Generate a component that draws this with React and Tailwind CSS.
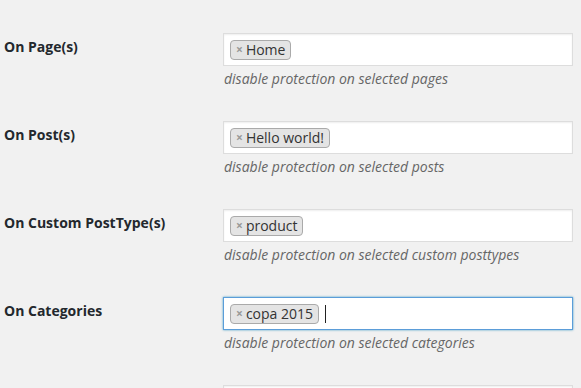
import React from 'react';

const ROWS = [
  { label: 'On Page(s)', tag: 'Home', hint: 'disable protection on selected pages' },
  { label: 'On Post(s)', tag: 'Hello world!', hint: 'disable protection on selected posts' },
  { label: 'On Custom PostType(s)', tag: 'product', hint: 'disable protection on selected custom posttypes' },
  { label: 'On Categories', tag: 'copa 2015', hint: 'disable protection on selected categories', focused: true },
  { label: '', tag: null, hint: '' },
];

function TagBox({ tag, focused }) {
  return (
    <div
      className={`w-[350px] h-[33px] bg-white border flex items-center pl-[6px] ${
        focused
          ? 'border-[#5b9dd9] shadow-[0_0_2px_rgba(30,140,190,0.8)]'
          : 'border-[#dddddd] shadow-[inset_0_1px_2px_rgba(0,0,0,0.07)]'
      }`}
    >
      {tag && (
        <span className="h-[20px] flex items-center bg-[#e4e4e4] border border-[#aaaaaa] rounded-[4px] pl-[5px] pr-[5px] text-[#333333] text-[14px] leading-none">
          <span className="text-[#999999] text-[12px] font-bold mr-[3px]">×</span>
          {tag}
        </span>
      )}
      {focused && <span className="ml-[6px] w-px h-[18px] bg-[#222222]" />}
    </div>
  );
}

export default function App() {
  return (
    <div
      className="w-[581px] h-[388px] overflow-hidden bg-[#f1f1f1] pt-[33px]"
      style={{ fontFamily: '"Open Sans", "Noto Sans", sans-serif' }}
    >
      {ROWS.map((row, i) => (
        <div key={i} className="flex h-[88px]">
          <div className="w-[223px] pl-[4px] pt-[4px] text-[14px] leading-[20px] font-bold text-[#23282d]">
            {row.label}
          </div>
          <div>
            <TagBox tag={row.tag} focused={row.focused} />
            {row.hint && (
              <p className="mt-[3px] pl-[1px] text-[14px] leading-[20px] italic text-[#666666]">{row.hint}</p>
            )}
          </div>
        </div>
      ))}
    </div>
  );
}
